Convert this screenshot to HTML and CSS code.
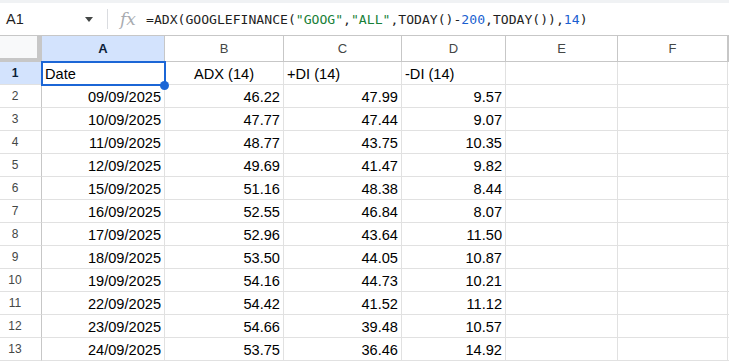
FILE: index.html
```html
<!DOCTYPE html>
<html lang="en">
<head>
    <meta charset="UTF-8">
    <title>Sheet</title>
    <link rel="stylesheet" href="styles.css">
</head>
<body>
    <div class="top-strip"></div>

    <!-- Formula bar -->
    <div class="formula-bar">
        <div class="name-box">
            <span>A1</span>
            <span class="arrow"></span>
        </div>
        <div class="sep"></div>
        <span class="fx">fx</span>
        <span class="formula">=ADX(GOOGLEFINANCE(<span class="str">"GOOG"</span>,<span class="str">"ALL"</span>,TODAY()-<span class="num">200</span>,TODAY()),<span class="num">14</span>)</span>
    </div>

    <!-- Grid -->
    <div class="sheet">
        <div class="row head">
            <div class="corner"></div>
            <div class="col active">A</div>
            <div class="col">B</div>
            <div class="col">C</div>
            <div class="col">D</div>
            <div class="col">E</div>
            <div class="col">F</div>
            <div class="col"></div>
        </div>
        <div class="row">
            <div class="rn active">1</div>
            <div class="cell sel">Date<span class="handle"></span></div>
            <div class="cell center">ADX (14)</div>
            <div class="cell">+DI (14)</div>
            <div class="cell">-DI (14)</div>
            <div class="cell"></div><div class="cell"></div><div class="cell"></div>
        </div>
        <div class="row">
            <div class="rn">2</div>
            <div class="cell right">09/09/2025</div><div class="cell right">46.22</div><div class="cell right">47.99</div><div class="cell right">9.57</div>
            <div class="cell"></div><div class="cell"></div><div class="cell"></div>
        </div>
        <div class="row">
            <div class="rn">3</div>
            <div class="cell right">10/09/2025</div><div class="cell right">47.77</div><div class="cell right">47.44</div><div class="cell right">9.07</div>
            <div class="cell"></div><div class="cell"></div><div class="cell"></div>
        </div>
        <div class="row">
            <div class="rn">4</div>
            <div class="cell right">11/09/2025</div><div class="cell right">48.77</div><div class="cell right">43.75</div><div class="cell right">10.35</div>
            <div class="cell"></div><div class="cell"></div><div class="cell"></div>
        </div>
        <div class="row">
            <div class="rn">5</div>
            <div class="cell right">12/09/2025</div><div class="cell right">49.69</div><div class="cell right">41.47</div><div class="cell right">9.82</div>
            <div class="cell"></div><div class="cell"></div><div class="cell"></div>
        </div>
        <div class="row">
            <div class="rn">6</div>
            <div class="cell right">15/09/2025</div><div class="cell right">51.16</div><div class="cell right">48.38</div><div class="cell right">8.44</div>
            <div class="cell"></div><div class="cell"></div><div class="cell"></div>
        </div>
        <div class="row">
            <div class="rn">7</div>
            <div class="cell right">16/09/2025</div><div class="cell right">52.55</div><div class="cell right">46.84</div><div class="cell right">8.07</div>
            <div class="cell"></div><div class="cell"></div><div class="cell"></div>
        </div>
        <div class="row">
            <div class="rn">8</div>
            <div class="cell right">17/09/2025</div><div class="cell right">52.96</div><div class="cell right">43.64</div><div class="cell right">11.50</div>
            <div class="cell"></div><div class="cell"></div><div class="cell"></div>
        </div>
        <div class="row">
            <div class="rn">9</div>
            <div class="cell right">18/09/2025</div><div class="cell right">53.50</div><div class="cell right">44.05</div><div class="cell right">10.87</div>
            <div class="cell"></div><div class="cell"></div><div class="cell"></div>
        </div>
        <div class="row">
            <div class="rn">10</div>
            <div class="cell right">19/09/2025</div><div class="cell right">54.16</div><div class="cell right">44.73</div><div class="cell right">10.21</div>
            <div class="cell"></div><div class="cell"></div><div class="cell"></div>
        </div>
        <div class="row">
            <div class="rn">11</div>
            <div class="cell right">22/09/2025</div><div class="cell right">54.42</div><div class="cell right">41.52</div><div class="cell right">11.12</div>
            <div class="cell"></div><div class="cell"></div><div class="cell"></div>
        </div>
        <div class="row">
            <div class="rn">12</div>
            <div class="cell right">23/09/2025</div><div class="cell right">54.66</div><div class="cell right">39.48</div><div class="cell right">10.57</div>
            <div class="cell"></div><div class="cell"></div><div class="cell"></div>
        </div>
        <div class="row">
            <div class="rn">13</div>
            <div class="cell right">24/09/2025</div><div class="cell right">53.75</div><div class="cell right">36.46</div><div class="cell right">14.92</div>
            <div class="cell"></div><div class="cell"></div><div class="cell"></div>
        </div>
    </div>
</body>
</html>
```

FILE: styles.css
```css
body {
    margin: 0;
    background: #fff;
    font-family: 'Liberation Sans', Arial, sans-serif;
    color: #1f1f1f;
    overflow: hidden;
}

.top-strip {
    height: 3px;
    background: #f0f2f4;
}

.formula-bar {
    display: flex;
    align-items: center;
    height: 32px;
    border-bottom: 1px solid #c7c7c7;
}

.name-box {
    display: flex;
    align-items: center;
    justify-content: space-between;
    width: 107px;
    box-sizing: border-box;
    padding: 0 14px 0 6px;
    font-size: 14.5px;
    color: #1f1f1f;
}

.arrow {
    width: 0;
    height: 0;
    border-left: 4px solid transparent;
    border-right: 4px solid transparent;
    border-top: 5px solid #444746;
}

.sep {
    width: 1px;
    height: 20px;
    background: #dadce0;
}

.fx {
    margin-left: 12px;
    width: 26px;
    font-family: 'DejaVu Serif', serif;
    font-style: italic;
    font-size: 17px;
    color: #a8abb0;
}

.formula {
    font-family: 'DejaVu Sans Mono', monospace;
    font-size: 13.1px;
    color: #1f1f1f;
}

.formula .str {
    color: #188038;
}

.formula .num {
    color: #1a5fd0;
}

.row {
    display: grid;
    grid-template-columns: 42px 123px 119px 118px 104px 112px 110px 1fr;
    height: 23px;
}

.row.head {
    height: 26px;
}

.corner {
    background: #f8f9fa;
    border-right: 5px solid #c7c7c7;
    border-bottom: 4px solid #c7c7c7;
}

.col {
    border-right: 1px solid #c7c7c7;
    border-bottom: 1px solid #c7c7c7;
    text-align: center;
    font-size: 13px;
    line-height: 25px;
    color: #444746;
}

.col.active, .rn.active {
    background: #d3e3fd;
    color: #0b1f3a;
    font-weight: bold;
}

.rn {
    border-right: 1px solid #c7c7c7;
    border-bottom: 1px solid #e1e1e1;
    text-align: center;
    padding-right: 11px;
    font-size: 12px;
    line-height: 22px;
    color: #444746;
}

.cell {
    border-right: 1px solid #e1e1e1;
    border-bottom: 1px solid #e1e1e1;
    padding: 3px 3px 0;
    font-size: 14.6px;
    line-height: 19px;
    color: #000;
    white-space: nowrap;
}

.cell.right {
    text-align: right;
}

.cell.center {
    text-align: center;
}

.cell.sel {
    position: relative;
}

.cell.sel::after {
    content: '';
    position: absolute;
    top: -1px;
    left: -1px;
    width: 125px;
    height: 25px;
    box-sizing: border-box;
    border: 2px solid #1b66d6;
}

.handle {
    position: absolute;
    right: -5px;
    bottom: -6px;
    width: 9px;
    height: 9px;
    border-radius: 50%;
    background: #1b66d6;
    z-index: 1;
}
```
